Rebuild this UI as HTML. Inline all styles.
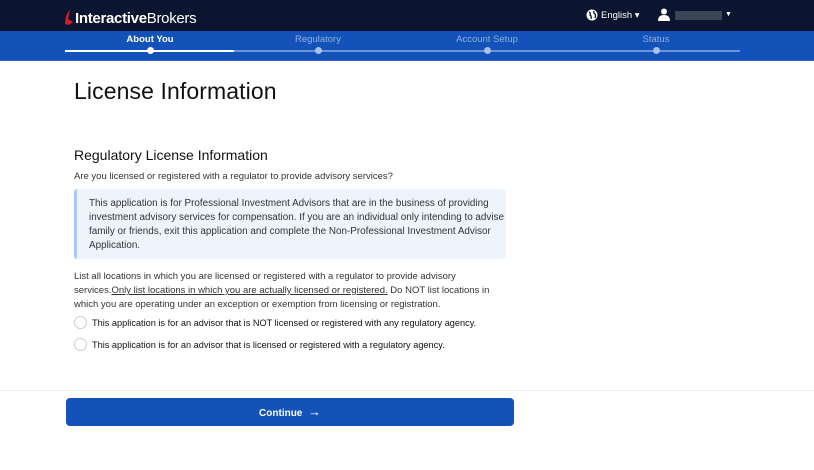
<!DOCTYPE html>
<html><head><meta charset="utf-8"><style>
*{margin:0;padding:0;box-sizing:border-box}
body{width:814px;height:470px;background:#fff;font-family:"Liberation Sans",sans-serif;color:#333;position:relative;overflow:hidden}
.top{position:absolute;left:0;top:0;width:814px;height:31px;background:#0b1530}
.steps{position:absolute;left:0;top:31px;width:814px;height:30px;background:#1352b8;border-bottom:1px solid #2a66c8}
.logo{position:absolute;left:64px;top:10px;color:#fff;font-size:15px;letter-spacing:-0.3px}
.logo b{font-weight:bold}
.lbl{position:absolute;top:3px;font-size:9.5px;color:#8fb0e4;transform:translateX(-50%)}
.lbl.a{color:#fff;font-weight:bold}
.line{position:absolute;left:65px;top:19px;width:675px;height:2px;background:#6e95d6}
.line.a{width:169px;background:#fff}
.dot{position:absolute;top:16px;width:7px;height:7px;border-radius:50%;background:#a9c1ea;margin-left:-3.5px}
.dot.a{background:#fff}
h1{position:absolute;left:74px;top:78px;font-size:23px;font-weight:normal;color:#111;letter-spacing:0.1px}
h2{position:absolute;left:74px;top:147px;font-size:14px;font-weight:normal;color:#111}
.t{position:absolute;left:74px;font-size:9.5px;line-height:14px;color:#333}
.box{position:absolute;left:74px;top:189px;width:432px;height:70px;background:#edf4fb;border-left:3px solid #a6cdf0;border-radius:3px;padding:8px 2px 0 12px;font-size:9.9px;line-height:14px;color:#333}
.r{position:absolute;left:74px;width:13px;height:13px;border:1px solid #ccc;border-radius:50%;background:#fff}
.rt{position:absolute;left:92px;font-size:9.2px;color:#111}
.sep{position:absolute;left:0;top:390px;width:814px;height:1px;background:#eee}
.btn{position:absolute;left:66px;top:398px;width:448px;height:28px;background:#1352b8;border-radius:4px;color:#fff;font-size:10px;font-weight:bold;text-align:center;line-height:28px}
</style></head><body>
<div class="top">
 <svg style="position:absolute;left:64px;top:9px" width="10" height="17" viewBox="0 0 10 17"><path d="M6 0 L2 7 L1 15 L5 16 L9 13 L4 10 Z" fill="#d81e2c"/></svg>
 <div class="logo" style="left:75px"><b>Interactive</b>Brokers</div>
 <svg style="position:absolute;left:586px;top:9px" width="12" height="12" viewBox="0 0 12 12"><circle cx="6" cy="6" r="5.5" fill="#fff"/><path d="M3 3 Q5 4 4 6 Q6 7 5 10 M8 2 Q7 4 9 5 Q10 7 9 9" stroke="#0b1530" stroke-width="1.3" fill="none"/></svg>
 <div style="position:absolute;left:601px;top:10px;color:#fff;font-size:9.5px">English ▾</div>
 <svg style="position:absolute;left:658px;top:8px" width="12" height="13" viewBox="0 0 12 13"><circle cx="6" cy="3.5" r="3" fill="#fff"/><path d="M0 13 Q0 7 6 7 Q12 7 12 13 Z" fill="#fff"/></svg>
 <div style="position:absolute;left:675px;top:11px;width:47px;height:9px;background:#3a4658"></div>
 <div style="position:absolute;left:725px;top:11px;color:#fff;font-size:7px">▼</div>
</div>
<div class="steps">
 <div class="lbl a" style="left:150px">About You</div>
 <div class="lbl" style="left:318px">Regulatory</div>
 <div class="lbl" style="left:487px">Account Setup</div>
 <div class="lbl" style="left:656px">Status</div>
 <div class="line"></div><div class="line a"></div>
 <div class="dot a" style="left:150px"></div>
 <div class="dot" style="left:318px"></div>
 <div class="dot" style="left:487px"></div>
 <div class="dot" style="left:656px"></div>
</div>
<h1>License Information</h1>
<h2>Regulatory License Information</h2>
<div class="t" style="top:170px">Are you licensed or registered with a regulator to provide advisory services?</div>
<div class="box">This application is for Professional Investment Advisors that are in the business of providing investment advisory services for compensation. If you are an individual only intending to advise family or friends, exit this application and complete the Non-Professional Investment Advisor Application.</div>
<div class="t" style="top:270px;width:420px">List all locations in which you are licensed or registered with a regulator to provide advisory services.<u>Only list locations in which you are actually licensed or registered.</u> Do NOT list locations in which you are operating under an exception or exemption from licensing or registration.</div>
<div class="r" style="top:316px"></div><div class="rt" style="top:318px">This application is for an advisor that is NOT licensed or registered with any regulatory agency.</div>
<div class="r" style="top:338px"></div><div class="rt" style="top:340px">This application is for an advisor that is licensed or registered with a regulatory agency.</div>
<div class="sep"></div>
<div class="btn">Continue &nbsp;<span style="font-size:13px">→</span></div>
</body></html>
